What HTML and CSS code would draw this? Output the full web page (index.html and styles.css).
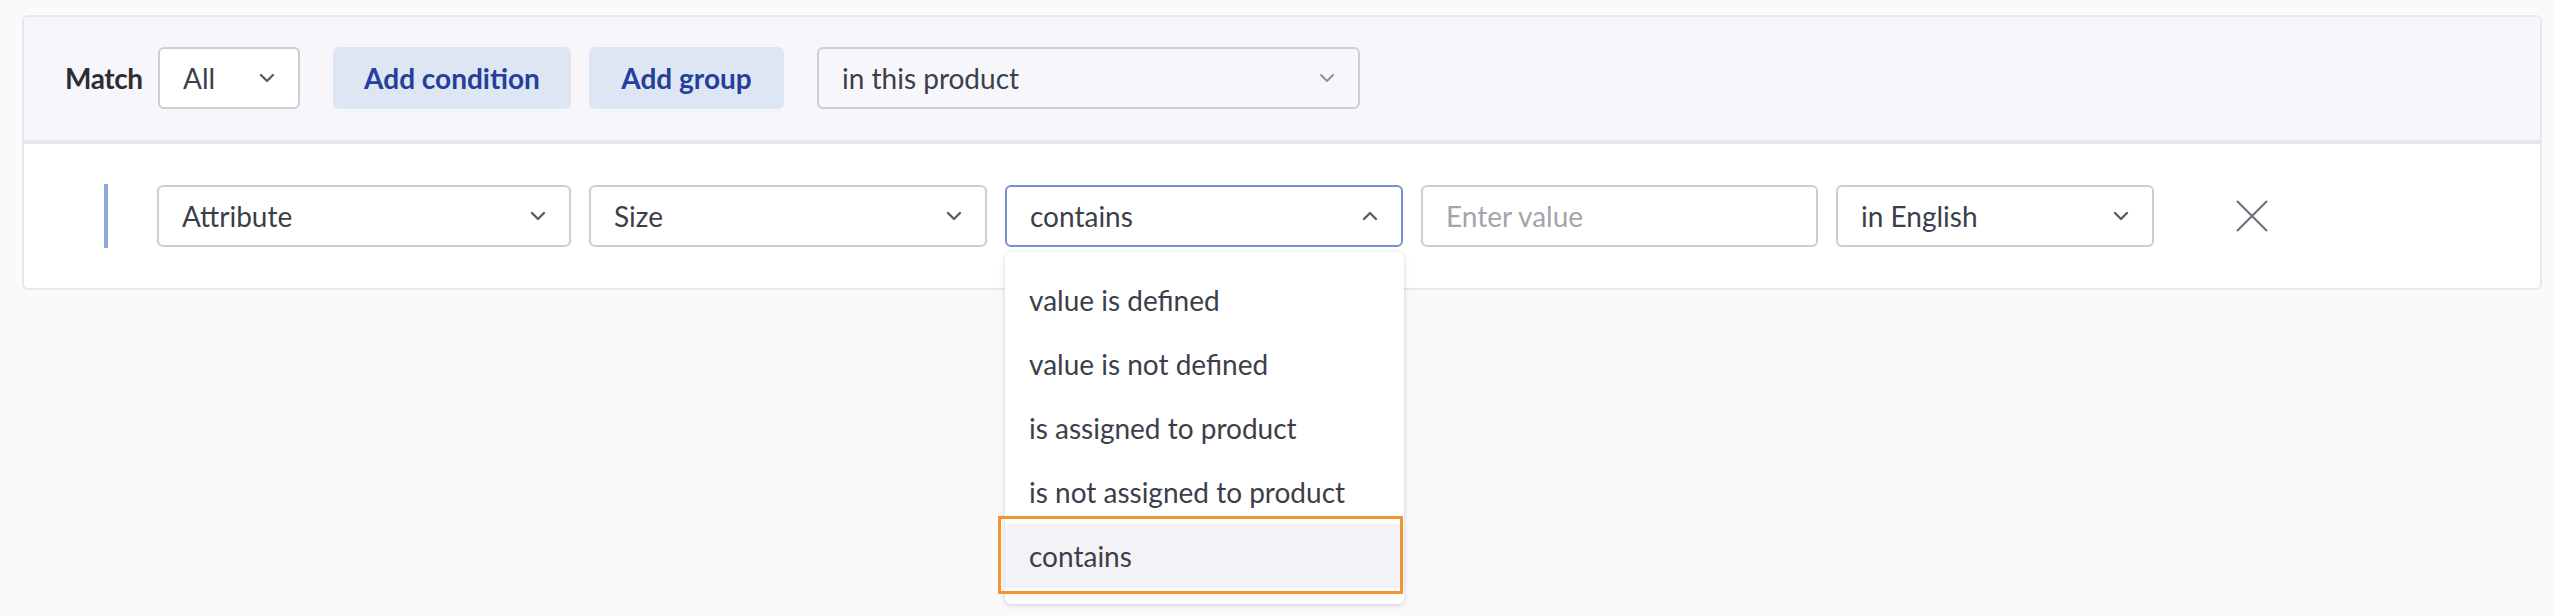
FILE: index.html
```html
<!DOCTYPE html>
<html lang="en">
<head>
<meta charset="utf-8">
<title>Conditions</title>
<link rel="stylesheet" href="styles.css">
</head>
<body>
<div class="page">
  <div class="card">
    <div class="header">
      <span class="match">Match</span>
      <div class="select w-all">
        <span class="value">All</span>
        <svg class="chev" width="16" height="10" viewBox="0 0 16 10"><polyline points="2,2 8,8 14,2" fill="none" stroke="#5b5e69" stroke-width="2.4" stroke-linecap="round" stroke-linejoin="round"/></svg>
      </div>
      <button class="btn w-cond">Add condition</button>
      <button class="btn w-group">Add group</button>
      <div class="select w-scope">
        <span class="value">in this product</span>
        <svg class="chev" width="16" height="10" viewBox="0 0 16 10"><polyline points="2,2 8,8 14,2" fill="none" stroke="#8f929b" stroke-width="2" stroke-linecap="round" stroke-linejoin="round"/></svg>
      </div>
    </div>
    <div class="row">
      <div class="bar"></div>
      <div class="select w-attr">
        <span class="value">Attribute</span>
        <svg class="chev" width="16" height="10" viewBox="0 0 16 10"><polyline points="2,2 8,8 14,2" fill="none" stroke="#5b5e69" stroke-width="2.4" stroke-linecap="round" stroke-linejoin="round"/></svg>
      </div>
      <div class="select w-size">
        <span class="value">Size</span>
        <svg class="chev" width="16" height="10" viewBox="0 0 16 10"><polyline points="2,2 8,8 14,2" fill="none" stroke="#5b5e69" stroke-width="2.4" stroke-linecap="round" stroke-linejoin="round"/></svg>
      </div>
      <div class="select open w-op">
        <span class="value">contains</span>
        <svg class="chev" width="16" height="10" viewBox="0 0 16 10"><polyline points="2,8 8,2 14,8" fill="none" stroke="#5b5e69" stroke-width="2.4" stroke-linecap="round" stroke-linejoin="round"/></svg>
        <ul class="menu">
          <li class="item">value is defined</li>
          <li class="item">value is not defined</li>
          <li class="item">is assigned to product</li>
          <li class="item">is not assigned to product</li>
          <li class="item active">contains</li>
        </ul>
      </div>
      <div class="input w-val"><span class="placeholder">Enter value</span></div>
      <div class="select w-lang">
        <span class="value">in English</span>
        <svg class="chev" width="16" height="10" viewBox="0 0 16 10"><polyline points="2,2 8,8 14,2" fill="none" stroke="#5b5e69" stroke-width="2.4" stroke-linecap="round" stroke-linejoin="round"/></svg>
      </div>
      <svg class="close" width="32" height="32" viewBox="0 0 32 32"><path d="M1 1 L31 31 M31 1 L1 31" fill="none" stroke="#6b6e78" stroke-width="2"/></svg>
    </div>
  </div>
</div>
</body>
</html>
```

FILE: styles.css
```css
* { box-sizing: border-box; }
html, body {
  margin: 0;
  padding: 0;
  background: #fafafc;
}
body {
  min-height: 616px;
  font-family: Lato, "Liberation Sans", sans-serif;
  font-size: 28px;
  color: #3b3f4b;
}
.page {
  min-height: 616px;
  padding: 15px 12px 0 22px;
}
.card {
  border: 2px solid #e7e7ec;
  border-radius: 6px;
  background: #ffffff;
}
.header {
  display: flex;
  align-items: center;
  gap: 18px;
  padding: 30px 41px 31px 41px;
  background: #f7f7fb;
  border-bottom: 4px solid #e6e6eb;
  border-radius: 5px 5px 0 0;
}
.match {
  width: 75px;
  white-space: nowrap;
  letter-spacing: -0.4px;
  font-weight: 700;
  color: #2b2e36;
}
.select, .input {
  position: relative;
  display: flex;
  align-items: center;
  justify-content: space-between;
  height: 62px;
  padding: 0 23px 0 23px;
  border: 2px solid #cdcdd3;
  border-radius: 6px;
  background: #ffffff;
}
.header .select.w-scope { background: #f7f7fb; }
.w-all { width: 142px; margin-right: 15px; }
.w-scope { width: 543px; margin-left: 15px; }
.btn {
  height: 62px;
  border: 0;
  border-radius: 6px;
  background: #dfe6f3;
  color: #23409d;
  font-family: inherit;
  font-size: 28px;
  font-weight: 700;
  padding: 0;
  cursor: pointer;
}
.w-cond { width: 238px; }
.w-group { width: 195px; }
.row {
  display: flex;
  align-items: center;
  gap: 18px;
  padding: 40px 41px 40px 80px;
}
.bar {
  width: 4px;
  height: 64px;
  background: #8fa8d6;
  margin-right: 31px;
}
.w-attr { width: 414px; }
.w-size { width: 398px; }
.w-op { width: 398px; }
.w-val { width: 397px; }
.w-lang { width: 318px; }
.select.open {
  border-color: #7592cf;
}
.chev { flex: none; }
.placeholder { color: #a3a5ad; }
.close {
  margin-left: 64px;
  width: 32px;
  height: 32px;
}
.menu {
  position: absolute;
  left: -2px;
  top: calc(100% + 7px);
  width: 399px;
  margin: 0;
  padding: 16px 0;
  list-style: none;
  background: #ffffff;
  border-radius: 6px;
  box-shadow: 0 1px 4px rgba(30, 35, 60, 0.14), 0 2px 10px rgba(30, 35, 60, 0.06);
  z-index: 5;
}
.item {
  position: relative;
  height: 64px;
  display: flex;
  align-items: center;
  padding-left: 24px;
  color: #3b3f4b;
}
.item.active {
  background: #f3f3f7;
}
.item.active::after {
  content: "";
  position: absolute;
  top: -8px;
  bottom: -6px;
  left: -7px;
  right: 1px;
  border: 3px solid #f0952f;
}
```
